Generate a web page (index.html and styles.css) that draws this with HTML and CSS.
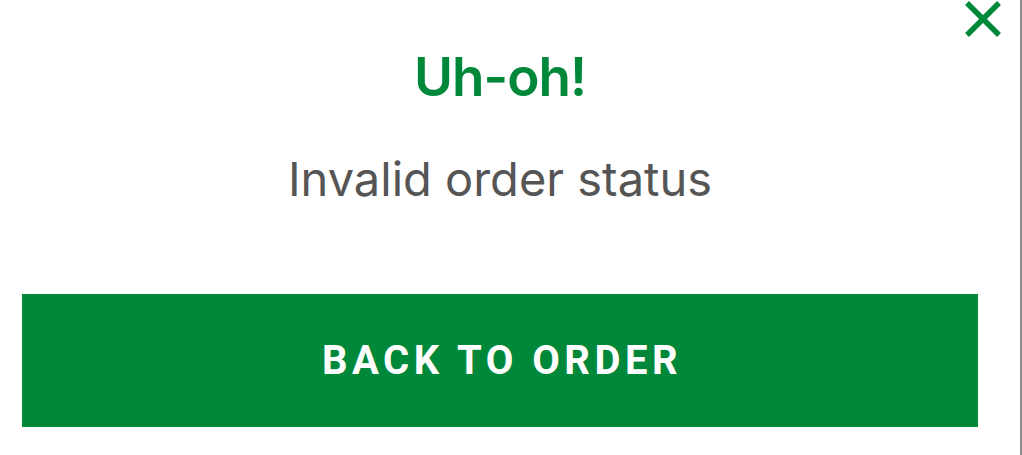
FILE: index.html
```html
<!DOCTYPE html>
<html lang="en">
<head>
<meta charset="utf-8">
<title>Uh-oh!</title>
<link rel="stylesheet" href="styles.css">
</head>
<body>
<div class="dialog">
  <button class="close" aria-label="Close">
    <svg viewBox="0 0 38 36" width="38" height="36"><path d="M3 2 L35 34 M35 2 L3 34" stroke="#00883a" stroke-width="5.5" fill="none"/></svg>
  </button>
  <h1 class="title">Uh-oh!</h1>
  <p class="message">Invalid order status</p>
  <button class="action">BACK TO ORDER</button>
</div>
</body>
</html>
```
FILE: styles.css
```css
html, body {
  margin: 0;
  height: 100%;
  background: #fff;
}

.dialog {
  position: relative;
  box-sizing: border-box;
  height: 455px;
  border-right: 2px solid #8a8a8a;
  padding: 0 42px 0 22px;
  display: flex;
  flex-direction: column;
  align-items: center;
}

.close {
  position: absolute;
  top: 1px;
  right: 18px;
  padding: 0;
  border: 0;
  background: none;
  line-height: 0;
}

.title {
  margin: 47px 0 0;
  font-family: Inter, "Liberation Sans", sans-serif;
  font-weight: 600;
  font-size: 53px;
  line-height: 60px;
  color: #00883a;
  letter-spacing: -1px;
}

.message {
  margin: 44px 0 0;
  font-family: Inter, "Liberation Sans", sans-serif;
  font-size: 47px;
  line-height: 56px;
  color: #555;
}

.action {
  margin-top: 87px;
  align-self: stretch;
  height: 133px;
  border: 0;
  padding: 0 0 0 4px;
  background: #00883a;
  color: #fff;
  font-family: Roboto, "Liberation Sans", sans-serif;
  font-weight: 700;
  font-size: 40px;
  letter-spacing: 4.5px;
}
```
